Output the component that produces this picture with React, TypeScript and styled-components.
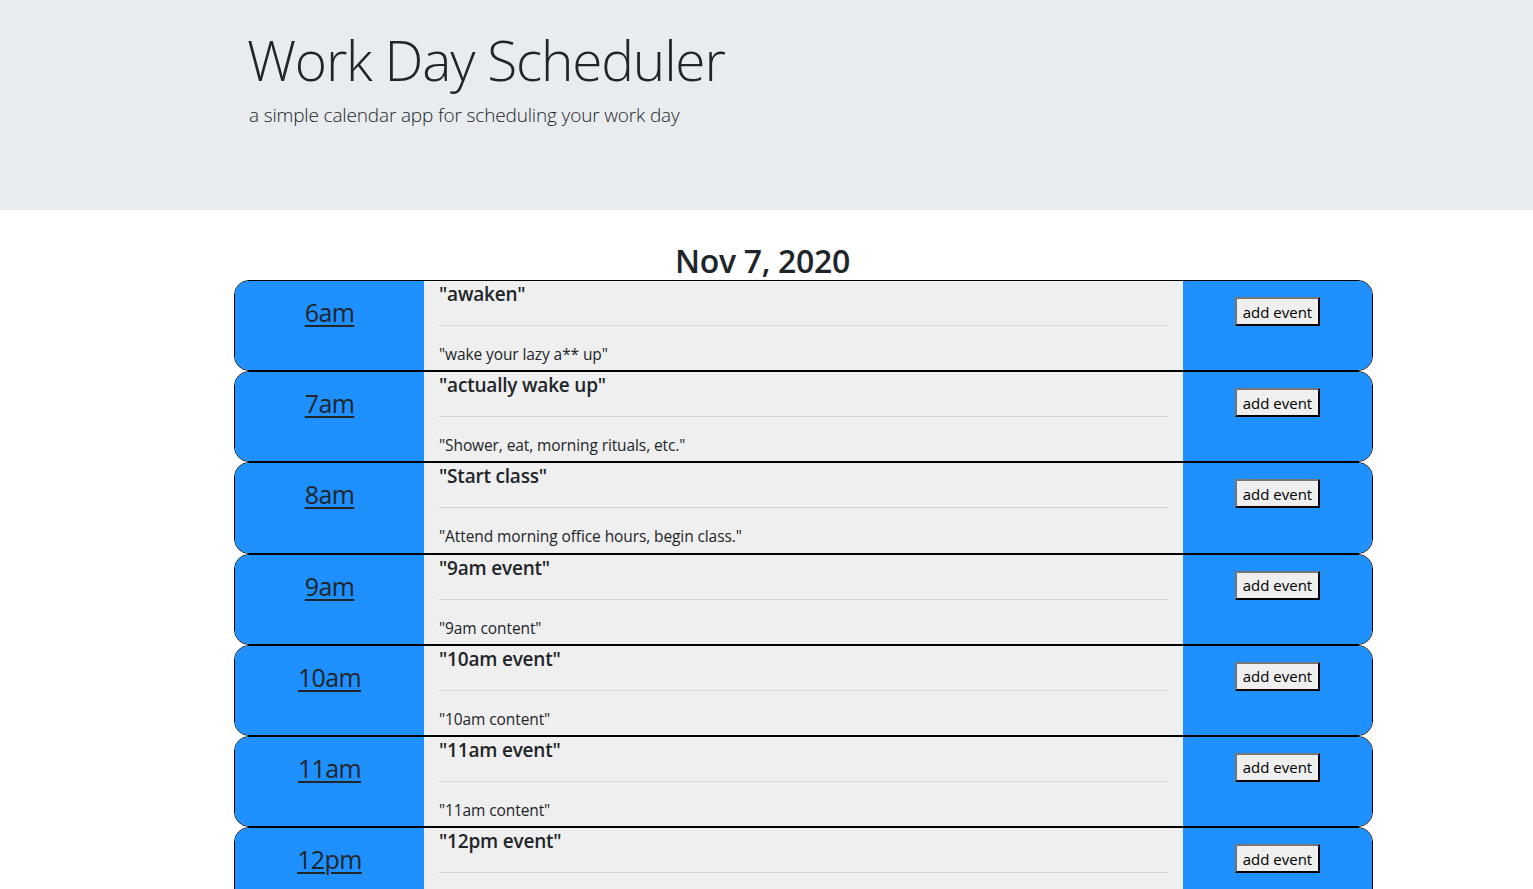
import React from "react";
import styled, { createGlobalStyle } from "styled-components";

const GlobalStyle = createGlobalStyle`
  html, body {
    margin: 0;
    padding: 0;
    background: #ffffff;
    color: #212529;
    font-family: "Open Sans", "Noto Sans", sans-serif;
  }
  * { box-sizing: border-box; }
`;

const Jumbotron = styled.header`
  background: #e9ecef;
  height: 210px;
  padding: 27px 0 0 247px;
`;

const Title = styled.h1`
  margin: 0;
  font-size: 55px;
  font-weight: 300;
  line-height: 1.2;
  letter-spacing: -1.2px;
  color: #212529;
`;

const Lead = styled.p`
  margin: 9px 0 0 2px;
  font-size: 19px;
  font-weight: 300;
  letter-spacing: -0.15px;
  color: #212529;
`;

const Main = styled.main`
  padding-top: 32px;
`;

const DateHeading = styled.h2`
  margin: 0;
  padding-right: 8px;
  text-align: center;
  font-size: 32px;
  font-weight: 600;
  line-height: 38px;
  letter-spacing: -0.3px;
  color: #212529;
`;

const Schedule = styled.div`
  width: 1139px;
  margin-left: 234px;
`;

const Row = styled.div`
  display: grid;
  grid-template-columns: 189px 759px 189px;
  height: 91.2px;
  border: 1px solid #000;
  border-radius: 15px;
  overflow: hidden;
`;

const Hour = styled.div`
  background: #1e90ff;
  display: flex;
  justify-content: center;
  padding-top: 14px;
`;

const HourLink = styled.a`
  font-size: 25px;
  line-height: 34px;
  color: #212529;
  text-decoration: underline;
  text-underline-offset: 3px;
  text-decoration-thickness: 2px;
  letter-spacing: -0.6px;
  height: 34px;
`;

const Body = styled.div`
  background: #efefef;
  padding: 0 15px;
  display: flex;
  flex-direction: column;
`;

const EventTitle = styled.h5`
  margin: 0;
  padding-top: 2px;
  font-size: 19px;
  font-weight: 600;
  line-height: 22px;
  letter-spacing: -0.2px;
  color: #212529;
`;

const Divider = styled.hr`
  margin: 20px 0 0 0;
  border: 0;
  border-top: 1px solid #d5d5d5;
  height: 0;
`;

const EventText = styled.p`
  margin: 18px 0 0 0;
  font-size: 15.5px;
  line-height: 21px;
  letter-spacing: -0.1px;
  color: #212529;
`;

const Actions = styled.div`
  background: #1e90ff;
  display: flex;
  justify-content: center;
  align-items: flex-start;
  padding-top: 16px;
`;

const AddButton = styled.button`
  font-family: "Open Sans", "Noto Sans", sans-serif;
  font-size: 15px;
  line-height: 20px;
  letter-spacing: 0;
  padding: 2px 0;
  background: #efefef;
  color: #000;
  border: 2px outset #767676;
  border-bottom-color: #3a3a3a;
  border-right-color: #3a3a3a;
  border-radius: 0;
  width: 85px;
  height: 29px;
`;

const events = [
  { hour: "6am", title: '"awaken"', text: '"wake your lazy a** up"' },
  { hour: "7am", title: '"actually wake up"', text: '"Shower, eat, morning rituals, etc."' },
  { hour: "8am", title: '"Start class"', text: '"Attend morning office hours, begin class."' },
  { hour: "9am", title: '"9am event"', text: '"9am content"' },
  { hour: "10am", title: '"10am event"', text: '"10am content"' },
  { hour: "11am", title: '"11am event"', text: '"11am content"' },
  { hour: "12pm", title: '"12pm event"', text: '"12pm content"' },
  { hour: "1pm", title: '"1pm event"', text: '"1pm content"' },
];

export default function App() {
  return (
    <>
      <GlobalStyle />
      <Jumbotron>
        <Title>Work Day Scheduler</Title>
        <Lead>a simple calendar app for scheduling your work day</Lead>
      </Jumbotron>
      <Main>
        <DateHeading>Nov 7, 2020</DateHeading>
        <Schedule>
          {events.map((e) => (
            <Row key={e.hour}>
              <Hour>
                <HourLink href="#">{e.hour}</HourLink>
              </Hour>
              <Body>
                <EventTitle>{e.title}</EventTitle>
                <Divider />
                <EventText>{e.text}</EventText>
              </Body>
              <Actions>
                <AddButton>add event</AddButton>
              </Actions>
            </Row>
          ))}
        </Schedule>
      </Main>
    </>
  );
}
